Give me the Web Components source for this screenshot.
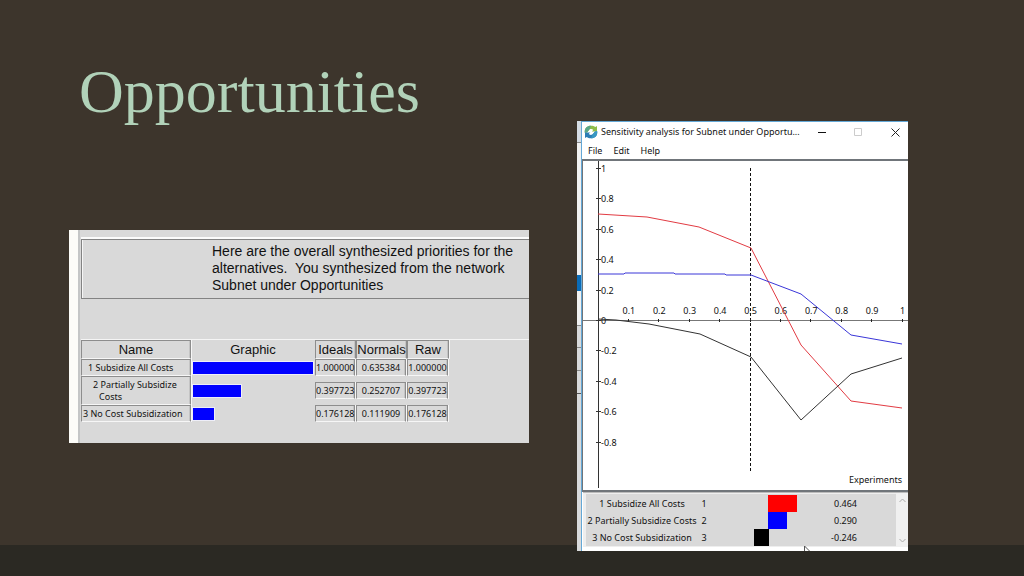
<!DOCTYPE html>
<html lang="en">
<head>
<meta charset="utf-8">
<meta name="viewport" content="width=device-width, initial-scale=1">
<title>Opportunities</title>
<style>
html, body { margin: 0; background: #3d352c; }
</style>
</head>
<body>
<deck-slide>
  <slide-title slot="left">Opportunities</slide-title>
  <priority-report slot="left">Here are the overall synthesized priorities for the alternatives.&nbsp; You synthesized from the network Subnet under Opportunities</priority-report>
  <sensitivity-window slot="right">
    <span slot="title">Sensitivity analysis for Subnet under Opportu...</span>
    <sensitivity-chart></sensitivity-chart>
    <sensitivity-legend></sensitivity-legend>
  </sensitivity-window>
</deck-slide>
<script>
const define = (name, html) => customElements.define(name, class extends HTMLElement {
  constructor() {
    super();
    this.attachShadow({ mode: 'open' }).innerHTML = html;
  }
});

define('slide-title', `
<style>
  :host { display: block; padding: 56px 0 0 10px; }
  h1 { margin: 0; font: 400 62px/70px "Century Schoolbook", "Liberation Serif", serif; color: #b1d2b9; }
</style>
<h1><slot></slot></h1>`);

define('priority-report', `
<style>
  :host { display: block; margin-top: 104px; box-sizing: border-box; border-left: 9px solid #fcfcf8; background: #d9d9d9; color: #111; font: 14px/17px "Liberation Sans", Arial, sans-serif; }
  .body { border-left: 2px solid #c4c6c6; padding: 9px 0 21px 1px; }
  .message { box-sizing: border-box; min-height: 60px; border: solid #838383; border-width: 1px 0 1px 1px; box-shadow: 0 -2px #fbfbfb, inset 1px 0 #f6f6f6; padding: 3px 0 4px 130px; margin-bottom: 40px; }
  p { margin: 0; }
  .line { border-top: 1px solid #f5f5f5; }
  table { border-collapse: separate; border-spacing: 0; table-layout: fixed; width: 368px; }
  th, td { box-sizing: border-box; padding: 0; font-weight: 400; text-align: center; vertical-align: middle; white-space: nowrap; }
  th { height: 19px; font-size: 13px; line-height: 17px; }
  td { height: 17px; font: 9px/12px "Noto Sans", sans-serif; }
  td.box { text-align: left; padding-left: 6px; }
  .tall td { height: 29px; }
  .tall td.box { padding-left: 17px; text-indent: -6px; }
  .last td.box { padding-left: 1px; }
  .box, .cell { border: 1px solid; border-color: #8d8d8d #8d8d8d #f6f6f6 #8d8d8d; box-shadow: inset -1px 0 #c4c4c4, 1px 0 #f7f7f7; }
  .cell { display: block; height: 15px; line-height: 15px; margin-right: 1px; }
  .bar { display: block; height: 12px; margin-left: 2px; background: #00f; box-shadow: 0 0 0 1px #eeeef8; }
</style>
<div class="body">
  <div class="message"><p><slot></slot></p></div>
  <div class="line">
    <table>
      <colgroup><col style="width:110px"><col style="width:124px"><col style="width:41px"><col style="width:51px"><col style="width:42px"></colgroup>
      <thead><tr><th class="box">Name</th><th>Graphic</th><th class="box">Ideals</th><th class="box">Normals</th><th class="box">Raw</th></tr></thead>
      <tbody>
        <tr><td class="box">1 Subsidize All Costs</td><td><span class="bar" style="width:120px"></span></td><td><span class="cell">1.000000</span></td><td><span class="cell">0.635384</span></td><td><span class="cell">1.000000</span></td></tr>
        <tr class="tall"><td class="box">2 Partially Subsidize<br>Costs</td><td><span class="bar" style="width:48px"></span></td><td><span class="cell">0.397723</span></td><td><span class="cell">0.252707</span></td><td><span class="cell">0.397723</span></td></tr>
        <tr class="last"><td class="box">3 No Cost Subsidization</td><td><span class="bar" style="width:21px"></span></td><td><span class="cell">0.176128</span></td><td><span class="cell">0.111909</span></td><td><span class="cell">0.176128</span></td></tr>
      </tbody>
    </table>
  </div>
</div>`);

define('sensitivity-window', `
<style>
  :host { display: grid; grid-template-columns: 4px minmax(0, 1fr); margin-top: 121px; background: #fff; color: #111; font: 9px/14px "Noto Sans", sans-serif; }
  .behind { background:
    linear-gradient(#0a6cb8, #0a6cb8) 0 154px / 4px 16px no-repeat,
    linear-gradient(#888, #888) 0 21px / 4px 1px no-repeat,
    linear-gradient(#888, #888) 0 204px / 4px 1px no-repeat,
    linear-gradient(#888, #888) 0 226px / 4px 1px no-repeat,
    linear-gradient(#888, #888) 0 249px / 4px 1px no-repeat,
    linear-gradient(#555, #555) 0 272px / 4px 1px no-repeat,
    linear-gradient(#d5dce4 21px, #f1f1f1 21px 204px, #d9dadb 204px); }
  .window { border: solid #64a8d6; border-width: 1px 0 0 1px; padding-bottom: 4px; min-width: 0; }
  header { display: flex; align-items: center; height: 20px; padding-left: 2px; }
  header svg { display: block; flex: none; }
  .title { flex: 1; min-width: 0; margin-left: 3px; white-space: nowrap; }
  button { all: unset; box-sizing: border-box; }
  header button { width: 36px; height: 20px; display: grid; place-items: center; flex: none; }
  header button:last-child { width: 26px; margin-left: 6px; }
  nav { display: flex; gap: 11px; height: 17px; padding-left: 6px; align-items: center; }
</style>
<div class="behind"></div>
<div class="window">
  <header>
    <svg width="14" height="14" viewBox="0 0 14 14" aria-hidden="true">
      <path d="M.8 7.8C.2 3.3 3.2.7 7 .7c2 0 3.2.5 4.3 1.4L13 1v5.6H7.8l1.5-1.7C8 3.6 5.6 3.9 4.7 5.4L3 7.6z" fill="#8fbd4a"/>
      <path d="M.8 7.8C.2 3.3 3.2.7 7 .7L5.4 4.5 3 7.6z" fill="#58a68a"/>
      <path d="M13.2 6.2c.6 4.5-2.4 7.1-6.2 7.1-2 0-3.2-.5-4.3-1.4L1 13V7.4h5.2L4.7 9.1c1.3 1.3 3.7 1 4.6-.5L11 6.4z" fill="#2c7db5"/>
      <path d="M13.2 6.2c.6 4.5-2.4 7.1-6.2 7.1L8.6 9.5 11 6.4z" fill="#3998c3"/>
    </svg>
    <span class="title"><slot name="title"></slot></span>
    <button aria-label="Minimize"><svg width="9" height="9"><path d="M0 4.5H8" stroke="#111"/></svg></button>
    <button aria-label="Maximize" disabled><svg width="9" height="9"><path d="M.5 .5h7v7h-7z" fill="none" stroke="#ccc"/></svg></button>
    <button aria-label="Close"><svg width="9" height="9"><path d="M.5 .5l8 8m0-8l-8 8" stroke="#222"/></svg></button>
  </header>
  <nav><button>File</button><button>Edit</button><button>Help</button></nav>
  <slot></slot>
</div>`);

const X = v => 15.5 + v * 304;
const Y = v => 160 - v * 152;
const ticks = [1, 2, 3, 4, 5, 6, 7, 8, 9, 10].map(n => n / 10);
const levels = [1, 0.8, 0.6, 0.4, 0.2, 0, -0.2, -0.4, -0.6, -0.8];

define('sensitivity-chart', `
<style>
  :host { display: block; border: solid #70757a; border-width: 2px 0 2px 1px; background: #fff; }
  svg { display: block; width: 100%; height: auto; }
  text { font: 9px "Noto Sans", sans-serif; fill: #111; }
  polyline { fill: none; stroke-width: 1; }
</style>
<svg viewBox="0 0 325 329" role="img" aria-label="Sensitivity of the alternatives">
  <path d="M15.5 0V327" stroke="#333"/>
  <path d="M0 159.5H325" stroke="#777"/>
  <path d="M167.5 7V311" stroke="#111" stroke-dasharray="3 2"/>
  ${ticks.map(t => `<path d="M${Math.round(X(t)) - .5} 158v3" stroke="#222"/><text x="${X(t)}" y="153" text-anchor="middle">${t}</text>`).join('')}
  ${levels.map(t => `<path d="M13 ${Math.round(Y(t)) - .5}h5" stroke="#333"/><text x="18" y="${Math.round(Y(t)) + 3}">${t}</text>`).join('')}
  <polyline stroke="#e23b43" points="15,53 64,56 116,66 168,87 218,184 268,240 319,247"/>
  <polyline stroke="#3a36d8" points="15,113 41,113 42,112 91,112 92,113 142,113 143,114 168,114 218,133 268,174 319,183"/>
  <polyline stroke="#333" points="15,158 33,159 66,163 117,173 168,196 218,259 268,213 319,197"/>
  <text x="319" y="322" text-anchor="end">Experiments</text>
</svg>`);

define('sensitivity-legend', `
<style>
  :host { position: relative; display: flex; margin-left: 1px; border-top: 1px solid #bbb; background: #f0f0f0; }
  .area { flex: 1; min-width: 0; border: solid #eee; border-width: 1px 0 1px 3px; background: #d9d9d9; padding-top: 1px; }
  table { width: 100%; border-collapse: collapse; table-layout: fixed; }
  td, th { padding: 0; height: 17px; font-weight: 400; text-align: center; line-height: 16px; white-space: nowrap; }
  td:last-child { text-align: right; padding-right: 39px; }
  .bar { display: block; height: 17px; }
  .scroll { width: 12px; display: flex; flex-direction: column; justify-content: space-between; align-items: center; padding: 5px 0 4px; box-sizing: border-box; }
  svg { display: block; }
  .pointer { position: absolute; left: 220px; bottom: -4px; }
</style>
<div class="area"><table>
  <colgroup><col style="width:112px"><col style="width:12px"><col style="width:88px"><col></colgroup>
  <tbody>
  <tr><th scope="row">1 Subsidize All Costs</th><td>1</td><td><span class="bar" style="background:#f00;width:29px;margin-left:58px"></span></td><td>0.464</td></tr>
  <tr><th scope="row">2 Partially Subsidize Costs</th><td>2</td><td><span class="bar" style="background:#00f;width:19px;margin-left:58px"></span></td><td>0.290</td></tr>
  <tr><th scope="row">3 No Cost Subsidization</th><td>3</td><td><span class="bar" style="background:#000;width:15px;margin-left:44px"></span></td><td>-0.246</td></tr>
  </tbody>
</table></div>
<div class="scroll" aria-hidden="true">
  <svg width="7" height="5"><path d="M.5 4L3.5 1l3 3" fill="none" stroke="#aaa"/></svg>
  <svg width="7" height="5"><path d="M.5 1l3 3 3-3" fill="none" stroke="#aaa"/></svg>
</div>
<svg class="pointer" width="8" height="6" aria-hidden="true"><path d="M1.5 8V1l5 5" fill="#fff" stroke="#555"/></svg>`);

define('deck-slide', `
<style>
  :host { display: grid; grid-template-columns: minmax(0, 460fr) minmax(0, 331fr); column-gap: 48px; align-items: start; box-sizing: border-box; min-height: 100vh; padding: 0 116px 25px 69px; background: linear-gradient(to top, #2b2923 31px, #3d352c 31px); }
</style>
<div><slot name="left"></slot></div>
<div><slot name="right"></slot></div>`);
</script>
</body>
</html>
